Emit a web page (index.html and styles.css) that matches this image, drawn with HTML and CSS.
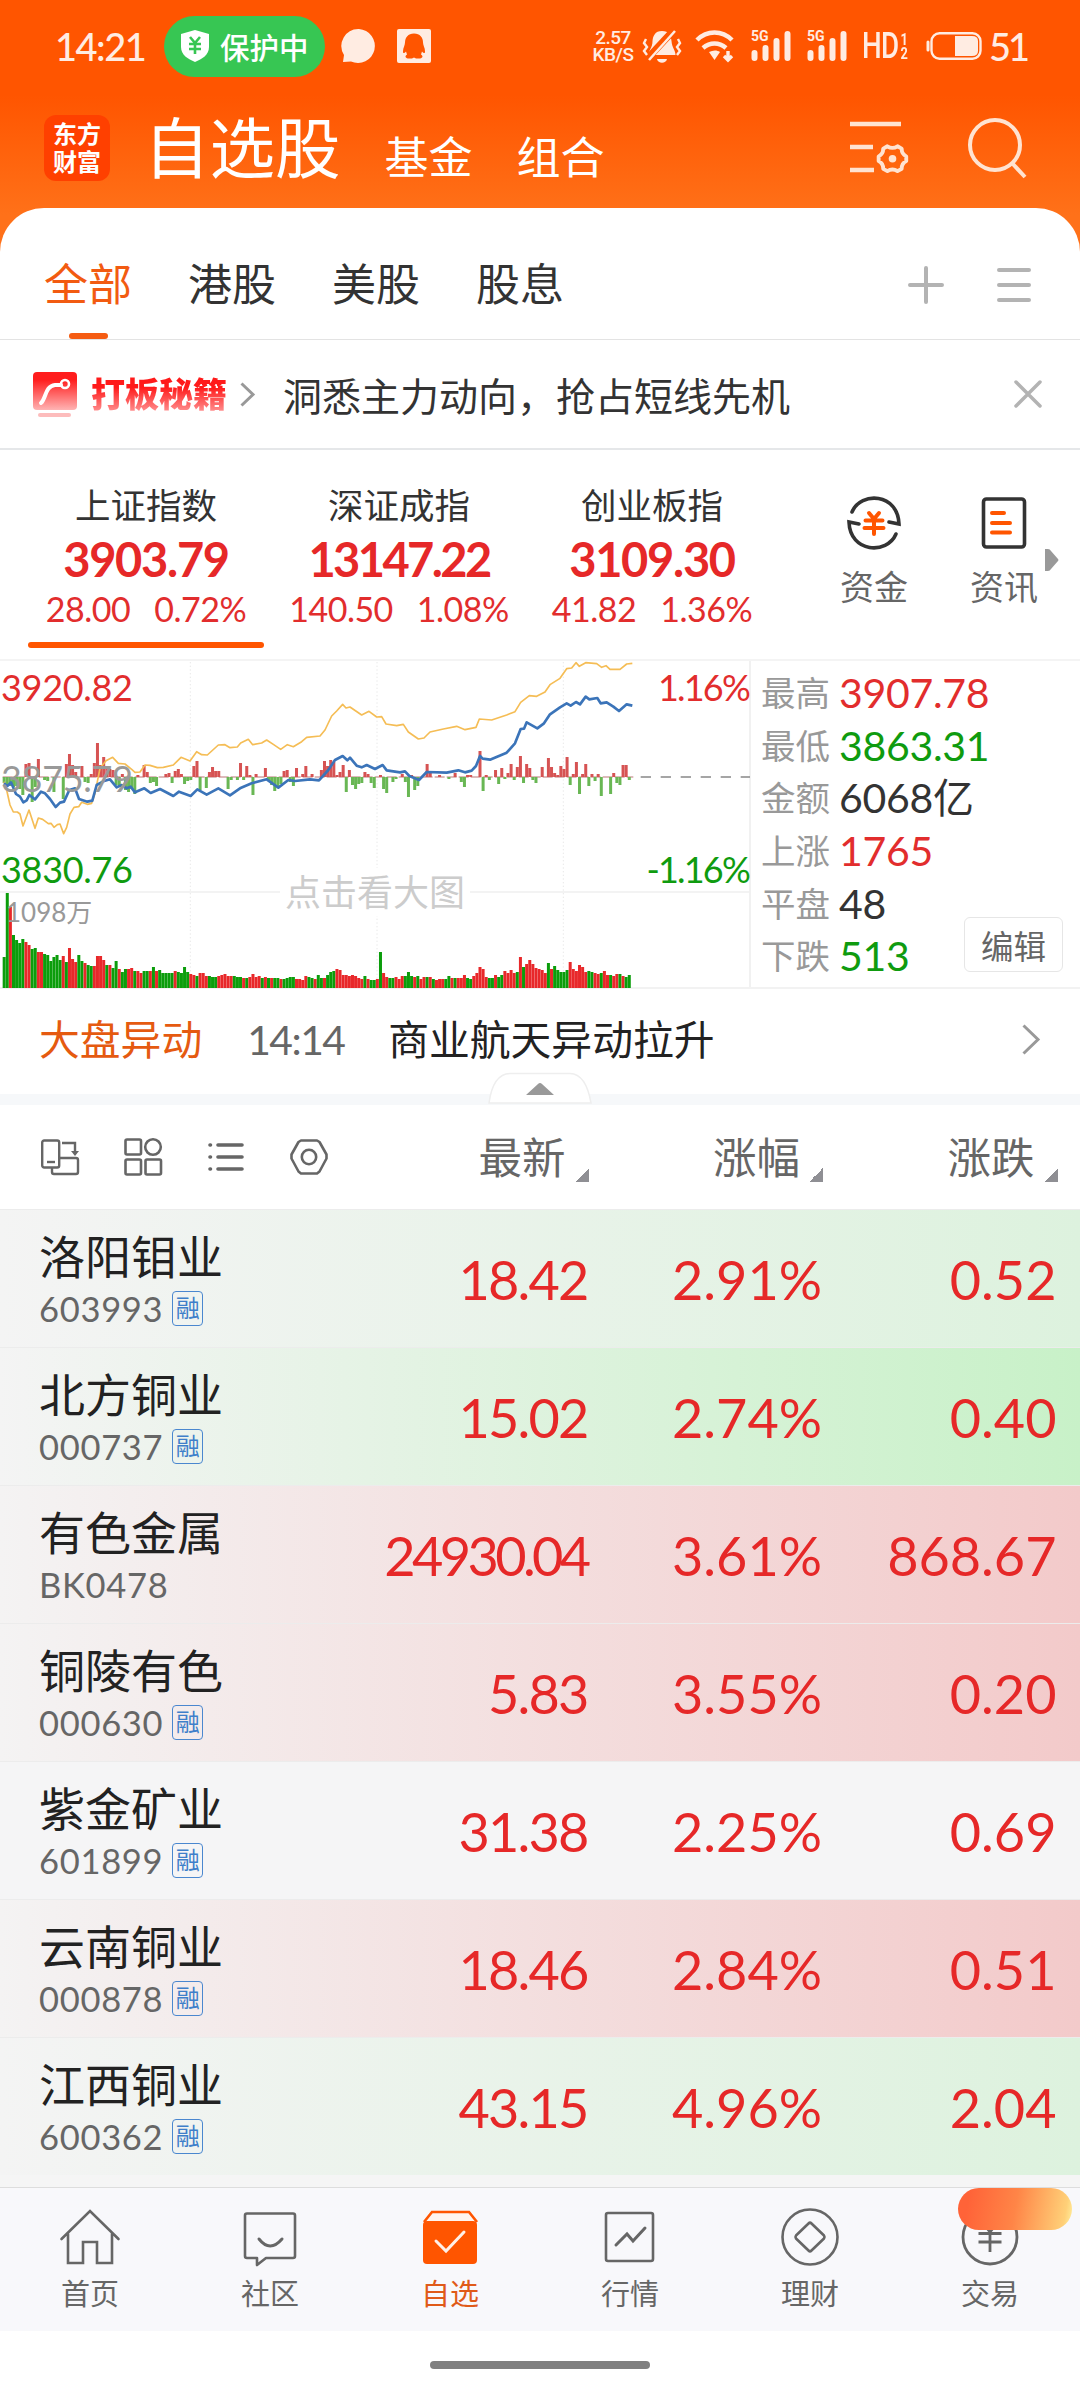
FILE: index.html
```html
<!DOCTYPE html>
<html lang="zh-CN">
<head>
    <meta charset="UTF-8">
    <meta name="viewport" content="width=device-width, initial-scale=1.0">
    <title>自选股</title>
    <link rel="stylesheet" href="styles.css">
</head>
<body>
    <header class="top">
        <div class="status">
            <span class="time">14:21</span>
            <span class="protect">
                <svg width="28" height="32" viewBox="0 0 28 32"><path d="M14 0L28 4V17C28 25 21 29 14 32C7 29 0 25 0 17V4Z" fill="#fff"/><path d="M9 7l5 6 5-6M14 13v11M8 14h12M8 19h12" fill="none" stroke="#37c653" stroke-width="2.6"/></svg>
                保护中
            </span>
            <svg class="bubble" width="35" height="35" viewBox="0 0 35 35"><path d="M18 0a17 17 0 1 1-8 32.500L2 33l1-7A17 17 0 0 1 18 0Z" fill="#ffece2"/></svg>
            <svg class="qq" width="34" height="34" viewBox="0 0 34 34"><rect width="34" height="34" rx="2" fill="#ffece2"/><path d="M17 4.500c6 0 9 4 9 9 0 3 2 5 2 9 0 2-1 2-3 0l-1 3c3 2 1 4-2 4-2 0-4 0-5-1-1 1-3 1-5 1-3 0-5-2-2-4l-1-3c-2 2-3 2-3 0 0-4 2-6 2-9 0-5 3-9 9-9Z" fill="#ff5500"/></svg>
            <div class="status-right">
                <span class="speed"><b>2.57</b><b>KB/S</b></span>
                <svg class="bell" width="38" height="35" viewBox="0 0 38 35"><path d="M19 2c7 0 9 5 9.500 10 .5 7 4 9 4 14H5.500c0-5 4-7 4-14C10 7 12 2 19 2Z" fill="#ffece2"/><path d="M14 30h10c-1 5-9 5-10 0Z" fill="#ffece2"/><path d="M3 31L30 2" stroke="#ff5500" stroke-width="7"/><path d="M6 31L32 2" stroke="#ffece2" stroke-width="2.500"/><path d="M3 10l-2 4 3 4-3 4 3 4M35 10l2 4-3 4 3 4-3 4" fill="none" stroke="#ffece2" stroke-width="2.400"/></svg>
                <svg class="wifi" width="40" height="32" viewBox="0 0 40 32"><g fill="none" stroke="#ffece2" stroke-width="4.500"><path d="M2 10C12 0 27 0 37 10"/><path d="M8 18c7-6 16-6 23 0"/></g><path d="M14 22c4-2 8-2 11 0l-5.500 8Z" fill="#ffece2"/><path d="M33 21v7M29 26l4 4 4-4" fill="none" stroke="#ffece2" stroke-width="3.400"/></svg>
                <svg class="signal" width="40" height="32" viewBox="0 0 40 32"><text x="0" y="11" class="svg-5g">5G</text><g stroke="#ffece2" stroke-width="6" stroke-linecap="round"><path d="M3.500 23v5M14.500 18v10M25.500 11v17M36.500 4v24"/></g></svg>
                <svg class="signal" width="40" height="32" viewBox="0 0 40 32"><text x="0" y="11" class="svg-5g">5G</text><g stroke="#ffece2" stroke-width="6" stroke-linecap="round"><path d="M3.500 23v5M14.500 18v10M25.500 11v17M36.500 4v24"/></g></svg>
                <span class="hd">HD<i><em>1</em><em>2</em></i></span>
                <svg class="battery" width="56" height="28" viewBox="0 0 56 28"><rect x="5.500" y="1.200" width="49" height="25.500" rx="8" fill="none" stroke="#ffece2" stroke-width="2.400"/><path d="M29 4h17q6 0 6 5v10q0 5-6 5H29Z" fill="#ffece2"/><path d="M2 10v8" stroke="#ffece2" stroke-width="3" stroke-linecap="round"/></svg>
                <span class="percent">51</span>
            </div>
        </div>
        <div class="title-bar">
            <div class="logo">东方<br>财富</div>
            <h1>自选股</h1>
            <span class="link">基金</span>
            <span class="link">组合</span>
            <div class="title-icons">
                <svg width="60" height="54" viewBox="0 0 60 54" fill="none" stroke="#ffe3d1" stroke-width="4.500"><path d="M0 3h51M0 26h23M0 49h24"/><path stroke-width="4.200" stroke-linejoin="round" d="M36.500 24q5.500 3.500 11 0l4.500 2.500q0 6 5 8.500v5q-5 2.500-5 8.500l-4.500 2.500q-5.500-3.500-11 0l-4.500-2.500q0-6-5-8.500v-5q5-2.500 5-8.500Z" transform="translate(3.800 3.200) scale(.92)"/><circle cx="42.500" cy="37.700" r="3.800" fill="#ffe3d1" stroke="none"/></svg>
                <svg width="60" height="62" viewBox="0 0 60 62" fill="none" stroke="#ffe3d1" stroke-width="4"><circle cx="27" cy="28" r="25"/><path d="M44 46L57 60"/></svg>
            </div>
        </div>
    </header>

    <main class="sheet">
        <nav class="tabs">
            <span class="tab active">全部</span>
            <span class="tab">港股</span>
            <span class="tab">美股</span>
            <span class="tab">股息</span>
            <div class="tab-icons">
                <svg width="36" height="38" viewBox="0 0 36 38" stroke="#b3b3b3" stroke-width="4" stroke-linecap="round"><path d="M2 19h32M18 2v34"/></svg>
                <svg width="34" height="34" viewBox="0 0 34 34" stroke="#b3b3b3" stroke-width="4" stroke-linecap="round"><path d="M2 2h30M2 17h30M2 32h30"/></svg>
            </div>
        </nav>

        <div class="promo">
            <svg width="44" height="45" viewBox="0 0 44 45">
                <defs><linearGradient id="redFade" x1="0" y1="0" x2="0" y2="1"><stop offset="0.200" stop-color="#ff1d1d"/><stop offset="1" stop-color="#ffb4b4"/></linearGradient></defs>
                <rect width="44" height="38" rx="4" fill="url(#redFade)"/>
                <path d="M8 31C13 27 12 14 22 13h6" fill="none" stroke="#fff" stroke-width="4" stroke-linecap="round"/>
                <circle cx="32" cy="12" r="4" fill="none" stroke="#fff" stroke-width="2.600"/>
                <rect x="5" y="41" width="33" height="4" rx="2" fill="#fdbcbc"/>
            </svg>
            <b class="promo-name">打板秘籍</b>
            <svg class="promo-arrow" width="15" height="25" viewBox="0 0 15 25" fill="none" stroke="#999" stroke-width="3"><path d="M1.500 1.500L13 12.500 1.500 23.500"/></svg>
            <span class="promo-text">洞悉主力动向，抢占短线先机</span>
            <svg class="promo-close" width="28" height="28" viewBox="0 0 28 28" stroke="#b3b3b3" stroke-width="3.500" stroke-linecap="round"><path d="M2 2l24 24M26 2L2 26"/></svg>
        </div>

        <section class="indexes">
            <div class="index active">
                <div class="index-name">上证指数</div>
                <div class="index-value">3903.79</div>
                <div class="index-change"><span>28.00</span><span>0.72%</span></div>
            </div>
            <div class="index">
                <div class="index-name">深证成指</div>
                <div class="index-value long">13147.22</div>
                <div class="index-change"><span>140.50</span><span>1.08%</span></div>
            </div>
            <div class="index">
                <div class="index-name">创业板指</div>
                <div class="index-value">3109.30</div>
                <div class="index-change"><span>41.82</span><span>1.36%</span></div>
            </div>
            <div class="shortcut money">
                <svg width="56" height="56" viewBox="0 0 56 56" fill="none" stroke-width="3.600" stroke-linecap="round"><g stroke="#333"><path d="M6 17C15-4 52-2 53 29l-10-2"/><path d="M50 39C41 60 4 58 3 27l10 2"/></g><path d="M23 18l5 6 5-6M28 24v15M19.500 25.500h17M18.500 33h19" stroke="#ff5500" stroke-width="4"/></svg>
                <span>资金</span>
            </div>
            <div class="shortcut news">
                <svg width="46" height="56" viewBox="0 0 46 56" fill="none" stroke-linecap="round"><rect x="2.500" y="4" width="41" height="48" rx="3" stroke="#333" stroke-width="3.600"/><path d="M11 18h12M11 28h18M11 37.500h18" stroke="#ff5500" stroke-width="4"/></svg>
                <span>资讯</span>
            </div>
            <svg class="more" width="14" height="22" viewBox="0 0 14 22"><path d="M0 0h3q2 0 3 2l7 8q1 1 0 2l-7 8q-1 2-3 2H0Z" fill="#999"/></svg>
        </section>

        <section class="market">
            <div class="chart">
                <svg class="chart-svg" id="chart" width="750" height="328" viewBox="0 30 2250 984">
                    <g stroke="#ddd" stroke-width="2" stroke-dasharray="4 7"><path d="M571 36V1014M1131 36V1014M1690 36V1014"/></g>
                    <path d="M0 726H2250" stroke="#efefef" stroke-width="5"/>
                    <path d="M1922 381H2250" stroke="#888" stroke-width="4" stroke-dasharray="31 29"/>
                    <path d="M8 381H1900" stroke="#b77" stroke-width="3" stroke-dasharray="30 6"/>
                    <g id="power"></g>
                    <g id="volume"></g>
                    <polyline fill="none" stroke="#f5bd55" stroke-width="5" stroke-linejoin="round" points="12,395 20,420 30,465 40,486 52,486 60,492 69,528 87,480 105,535 115,504 128,508 145,521 153,520 162,532 172,524 180,522 191,551 200,532 210,492 222,472 236,470 245,457 262,463 275,460 285,430 292,395 300,355 318,332 338,322 355,340 375,342 395,358 405,367 420,366 435,345 450,346 472,353 490,352 520,345 543,322 570,333 590,305 605,314 622,315 655,285 675,284 690,293 712,291 722,279 745,268 758,284 785,279 800,270 820,283 842,298 862,284 880,290 905,275 920,262 960,258 975,240 995,198 1010,183 1028,163 1038,174 1050,171 1085,195 1107,184 1130,201 1145,200 1158,222 1190,227 1210,223 1225,246 1255,267 1272,264 1290,246 1330,237 1370,229 1395,239 1428,232 1438,207 1475,210 1520,195 1545,185 1562,157 1588,137 1610,139 1635,126 1650,104 1680,85 1700,56 1715,54 1728,38 1738,49 1757,38 1790,41 1805,52 1818,47 1830,58 1860,58 1880,42 1897,40"/>
                    <polyline fill="none" stroke="#3b74b9" stroke-width="8" stroke-linejoin="round" points="12,400 22,408 33,397 48,432 60,440 70,457 80,451 88,435 105,448 123,425 135,430 150,447 167,471 180,458 192,455 208,420 225,415 237,447 262,455 277,452 290,405 310,394 330,388 350,412 365,405 380,415 392,410 405,427 433,415 452,429 480,417 520,438 537,425 572,438 592,418 620,434 655,415 690,436 720,415 755,400 800,388 835,413 865,390 885,393 930,388 957,391 985,360 1005,330 1028,318 1042,331 1050,323 1070,347 1085,352 1100,345 1125,357 1148,345 1160,361 1200,367 1215,364 1228,378 1257,390 1280,366 1340,368 1375,361 1395,367 1415,362 1428,348 1440,318 1448,326 1470,329 1520,308 1545,280 1562,237 1572,236 1580,217 1612,235 1632,220 1650,193 1680,172 1700,160 1712,167 1728,156 1740,163 1757,140 1768,148 1792,144 1802,160 1820,157 1840,170 1857,183 1880,163 1897,167"/>
                </svg>
                <span class="lab high">3920.82</span>
                <span class="lab base">3875.79</span>
                <span class="lab low">3830.76</span>
                <span class="lab up">1.16%</span>
                <span class="lab down">-1.16%</span>
                <span class="lab vol">1098万</span>
                <span class="lab tip">点击看大图</span>
            </div>
            <div class="stats">
                <div class="stat"><label>最高</label><span class="red">3907.78</span></div>
                <div class="stat"><label>最低</label><span class="green">3863.31</span></div>
                <div class="stat"><label>金额</label><span>6068亿</span></div>
                <div class="stat"><label>上涨</label><span class="red">1765</span></div>
                <div class="stat"><label>平盘</label><span>48</span></div>
                <div class="stat"><label>下跌</label><span class="green">513</span></div>
                <button class="edit">编辑</button>
            </div>
        </section>

        <div class="alert">
            <span class="alert-name">大盘异动</span>
            <span class="alert-time">14:14</span>
            <span class="alert-text">商业航天异动拉升</span>
            <svg class="alert-arrow" width="18" height="31" viewBox="0 0 18 31" fill="none" stroke="#999" stroke-width="3"><path d="M1.500 1.500L16 15.500 1.500 29.500"/></svg>
            <svg class="fold" width="104" height="33" viewBox="0 0 104 33"><path d="M1 31Q5 2 22 1.500H82Q98 2 103 31Z" fill="#fff" stroke="#eee" stroke-width="1.500"/><path d="M38 23L50 12q2-2 4 0L66 23Z" fill="#999"/></svg>
        </div>

        <section class="list">
            <div class="list-head">
                <div class="tools">
                    <svg width="38" height="38" viewBox="0 0 38 38" fill="none" stroke="#666" stroke-width="2.400"><rect x="1.200" y="2.500" width="17" height="27" rx="2"/><path d="M6 24h8"/><path d="M18 20h17q2 0 2 2v12q0 2-2 2H13q-2 0-2-2v-4M21 5h13v10"/><path d="M30 13h8l-4 5Z" fill="#666" stroke="none"/></svg>
                    <svg width="38" height="38" viewBox="0 0 38 38" fill="none" stroke="#666" stroke-width="2.600"><rect x="1.500" y="1.500" width="15.500" height="15" rx="1.500"/><circle cx="29" cy="9" r="7.800"/><rect x="1.500" y="21.500" width="15.500" height="15" rx="1.500"/><rect x="21.500" y="21.500" width="15.500" height="15" rx="1.500"/></svg>
                    <svg width="38" height="38" viewBox="0 0 38 38" fill="none" stroke="#666" stroke-width="3.600" stroke-linecap="round"><path d="M3 7h.5M3 19h.5M3 31h.5M11 7h24M11 19h24M11 31h24"/></svg>
                    <svg width="38" height="38" viewBox="0 0 38 38" fill="none" stroke="#666" stroke-width="2.600" stroke-linejoin="round"><path d="M11 2.500h16l2.500 1.500 7 12.500v4l-7 13-2.500 2H11l-2.500-2-7-13v-4l7-12.500Z"/><circle cx="19" cy="19" r="7.200"/></svg>
                </div>
                <span class="col">最新<i></i></span>
                <span class="col">涨幅<i></i></span>
                <span class="col">涨跌<i></i></span>
            </div>
            <div class="row light-green">
                <div class="stock"><div class="stock-name">洛阳钼业</div><div class="code">603993<em>融</em></div></div>
                <span>18.42</span><span>2.91%</span><span>0.52</span>
            </div>
            <div class="row deep-green">
                <div class="stock"><div class="stock-name">北方铜业</div><div class="code">000737<em>融</em></div></div>
                <span>15.02</span><span>2.74%</span><span>0.40</span>
            </div>
            <div class="row pink">
                <div class="stock"><div class="stock-name">有色金属</div><div class="code">BK0478</div></div>
                <span class="long">24930.04</span><span>3.61%</span><span>868.67</span>
            </div>
            <div class="row pink">
                <div class="stock"><div class="stock-name">铜陵有色</div><div class="code">000630<em>融</em></div></div>
                <span>5.83</span><span>3.55%</span><span>0.20</span>
            </div>
            <div class="row">
                <div class="stock"><div class="stock-name">紫金矿业</div><div class="code">601899<em>融</em></div></div>
                <span>31.38</span><span>2.25%</span><span>0.69</span>
            </div>
            <div class="row pink">
                <div class="stock"><div class="stock-name">云南铜业</div><div class="code">000878<em>融</em></div></div>
                <span>18.46</span><span>2.84%</span><span>0.51</span>
            </div>
            <div class="row light-green">
                <div class="stock"><div class="stock-name">江西铜业</div><div class="code">600362<em>融</em></div></div>
                <span>43.15</span><span>4.96%</span><span>2.04</span>
            </div>
        </section>
    </main>

    <footer class="bottom">
        <div class="menu">
            <svg width="60" height="60" viewBox="0 0 60 60" fill="none" stroke="#666" stroke-width="2.600" stroke-linecap="round"><path d="M1.500 32L30 4 58.500 32M8 27v29h15V35h14v21h15V27"/></svg>
            <span>首页</span>
        </div>
        <div class="menu">
            <svg width="60" height="60" viewBox="0 0 60 60" fill="none" stroke="#666" stroke-width="2.600" stroke-linecap="round" stroke-linejoin="round"><path d="M7 6.500h46q2 0 2 2V49q0 2-2 2H26l-9 7v-7H7q-2 0-2-2V8.500q0-2 2-2Z"/><path d="M19 32q11 14 23 0" stroke-width="3"/></svg>
            <span>社区</span>
        </div>
        <div class="menu active">
            <svg width="60" height="60" viewBox="0 0 60 60" fill="none"><path d="M4 15l8-10h37l8 10" stroke="#ff5500" stroke-width="2.600" fill="#fff4ee"/><rect x="3" y="14" width="54" height="43" rx="4" fill="#ff5500"/><path d="M16 34l10 10 18-19" stroke="#fff0e8" stroke-width="3" stroke-linecap="round"/></svg>
            <span>自选</span>
        </div>
        <div class="menu">
            <svg width="60" height="60" viewBox="0 0 60 60" fill="none" stroke="#666" stroke-width="2.600" stroke-linecap="round"><rect x="6" y="6" width="47" height="48" rx="2"/><path d="M16 38l11-11 6 7 12-13" stroke-width="3"/></svg>
            <span>行情</span>
        </div>
        <div class="menu">
            <svg width="60" height="60" viewBox="0 0 60 60" fill="none" stroke="#666" stroke-width="2.600" stroke-linejoin="round"><circle cx="30" cy="30" r="27.500"/><path d="M28.500 16.500q1.500-1.500 3 0L44 28.500q1 1.500 0 3L31.500 43.500q-1.500 1.500-3 0L16 31.500q-1-1.500 0-3Z"/></svg>
            <span>理财</span>
        </div>
        <div class="menu">
            <svg width="60" height="60" viewBox="0 0 60 60" fill="none" stroke="#666" stroke-width="2.800"><circle cx="30" cy="30" r="27"/><path d="M22 15l8 10 8-10M30 25v20M18.500 26.500h23M18.500 35h23"/></svg>
            <span>交易</span>
            <i class="badge"></i>
        </div>
    </footer>
    <div class="home-bar"></div>

    <script>
        // 分时图数据: 成交量高度 + 颜色 (r 涨 / g 跌)
        const volume = [31,95,81,53,48,45,49,46,43,39,40,36,36,34,33,27,31,33,28,32,26,40,29,26,33,27,25,23,22,22,32,32,28,23,23,20,27,19,16,19,
            19,20,17,17,15,17,17,17,21,17,18,15,15,15,15,17,16,15,21,16,14,13,12,15,15,12,12,11,11,12,13,14,12,12,12,11,11,10,10,11,
            14,11,12,10,11,10,10,10,10,9,9,10,11,11,9,9,8,12,11,10,9,13,10,10,13,16,17,19,18,13,13,12,13,12,10,9,12,9,8,8,
            9,36,15,11,10,10,11,9,12,12,16,12,11,12,9,11,11,11,9,8,9,9,9,12,10,10,10,10,13,10,9,12,15,21,19,11,10,10,13,11,
            13,17,15,18,15,16,31,21,24,28,24,20,19,18,15,25,19,22,18,16,16,18,26,19,17,23,21,16,17,16,15,14,15,17,13,13,12,14,14,12,11,13,12,9]
        const color = 'ggrggggrrggrrggggggrgrrrggrggrrrrgrggrggrrgrrggrgrgggggrggggrrgrrrgggrrrrrggg' +
            'rgrrrrgrgrggrggggrrrrggrggrgggrrrrrrrrrgrggrgrrggrrrgggrgrrgrgrrrggrgrrrggrrrrrggrggrrrrgrgr' +
            'rrrrrrgrgggggrrrrrrggrrgrrgrrgrggrrg'
        // 中轴红绿柱: [分钟, 高度]
        const power = [[0,-6],[1,-8],[2,-9],[3,-10],[4,-9],[5,-12],[6,-18],[7,13],[8,14],[9,-25],[10,-10],[11,18],[13,-3],[14,-4],[16,-15],[19,-22],[20,13],[21,23],[22,12],[23,5],[25,11],[26,-5],[27,-6],[28,3],[29,14],[30,34],[31,12],[32,20],[33,10],[34,8],[35,7],[36,-8],[37,-10],[38,3],[39,-13],[40,-15],[41,-12],[42,-17],
            [43,2],[45,12],[46,5],[47,-6],[48,-5],[49,-9],[52,3],[53,4],[54,-6],[55,6],[56,8],[57,3],[58,-7],[59,-4],[60,-3],[61,11],[62,16],[63,-13],[65,-11],[66,5],[67,10],[68,6],[69,6],[72,-12],[73,-3],[75,-3],[76,14],[77,-3],[78,11],[79,2],[80,-18],[81,3],[84,9],[85,-4],[86,-8],[87,-14],[88,-9],[89,-7],[90,6],[91,7],[92,-5],[93,-9],[94,9],
            [96,3],[97,11],[99,3],[102,7],[103,16],[104,11],[105,17],[106,15],[107,2],[108,5],[109,12],[110,-15],[111,7],[112,-8],[113,-12],[114,-7],[115,-6],[116,5],[117,3],[118,-6],[119,-11],[121,2],[122,-12],[123,-16],[125,-5],[126,-2],[128,3],[129,-5],[130,-20],[131,2],[132,-13],[133,-9],[136,13],[137,5],[140,2],[143,-2],[145,4],[147,-5],[148,-10],[149,2],[150,2],
            [153,26],[154,-14],[155,2],[156,-3],[158,7],[159,-7],[160,9],[161,-2],[162,4],[163,13],[164,-3],[165,10],[166,21],[167,-6],[168,13],[169,9],[170,-3],[171,-6],[173,10],[175,19],[176,10],[177,4],[178,2],[179,11],[180,8],[181,20],[182,-8],[183,3],[184,15],[185,-17],[186,3],[187,13],[188,-9],[189,3],[190,-4],[191,3],[192,-19],[195,-17],[196,4],[197,-6],[198,-8],[199,12],[200,12],[201,-3]]

        const step = 9.33
        function drawBars() {
            let tag = ''
            volume.slice(0, 202).forEach((v, i) => {
                const h = v * 3
                tag += `<rect x="${8 + i * step}" y="${1014 - h}" width="9" height="${h}" fill="${color[i] == 'g' ? '#0b9d0b' : '#e8282a'}"/>`
            })
            document.querySelector('#volume').innerHTML = tag

            tag = ''
            power.forEach(([i, v]) => {
                const h = Math.abs(v) * 3
                tag += `<rect x="${8 + i * step}" y="${v > 0 ? 381 - h : 381}" width="9" height="${h}" fill="${v > 0 ? '#d65353' : '#69b754'}"/>`
            })
            document.querySelector('#power').innerHTML = tag
        }
        drawBars()
    </script>
</body>
</html>
```
FILE: styles.css
```css
* {
    box-sizing: border-box;
}
body {
    margin: 0;
    width: 1080px;
    height: 2400px;
    overflow: hidden;
    background: #fff;
    color: #333;
    font-family: "Lato", "Noto Sans CJK SC", sans-serif;
}
svg {
    display: block;
    flex: none;
    overflow: visible;
}
i, em {
    font-style: normal;
}
.red {
    color: #e22d2d;
}
.green {
    color: #0f9b0f;
}

/* 顶部 */
.top {
    height: 260px;
    background: linear-gradient(#ff5500 95px, #ff7119 215px);
    color: #fff;
}
.status {
    display: flex;
    align-items: center;
    height: 92px;
    padding-left: 55px;
    color: #ffece2;
}
.time {
    width: 109px;
    font-size: 38px;
    line-height: 46px;
    letter-spacing: -1.5px;
    font-weight: 500;
}
.protect {
    display: flex;
    align-items: center;
    gap: 11px;
    width: 161px;
    height: 61px;
    padding-left: 17px;
    border-radius: 31px;
    background: #37c653;
    color: #fff;
    font-size: 29.5px;
    font-weight: 500;
    white-space: nowrap;
}
.bubble {
    margin-left: 16px;
}
.qq {
    margin-left: 21px;
}
.status-right {
    display: flex;
    align-items: center;
    margin-left: 160px;
}
.speed {
    display: flex;
    flex-direction: column;
    align-items: center;
    width: 44px;
    font-family: "Roboto", sans-serif;
    font-size: 19px;
    line-height: 17px;
}
.speed b {
    font-weight: 500;
    letter-spacing: -0.5px;
}
.bell {
    margin-left: 8px;
}
.wifi {
    margin-left: 14px;
}
.signal {
    margin-left: 16px;
}
.svg-5g {
    font: 700 14px "Roboto", sans-serif;
    fill: #ffece2;
}
.hd {
    display: flex;
    align-items: center;
    gap: 3px;
    width: 46px;
    margin-left: 15px;
    font: 500 37px/34px "Roboto", sans-serif;
    letter-spacing: -1px;
    transform: scaleX(0.75);
    transform-origin: left;
}
.hd i {
    display: flex;
    flex-direction: column;
    font-size: 17px;
    line-height: 14px;
    font-weight: 700;
}
.battery {
    margin-left: 18px;
}
.percent {
    margin-left: 7px;
    font-size: 38px;
    line-height: 46px;
    font-weight: 500;
    letter-spacing: -3px;
}
.title-bar {
    display: flex;
    align-items: center;
    height: 112px;
    padding-left: 44px;
}
.logo {
    width: 66px;
    height: 66px;
    padding-top: 5px;
    border-radius: 12px;
    background: #ff4000;
    font-size: 24px;
    line-height: 28px;
    font-weight: 700;
    text-align: center;
}
h1 {
    margin: 0 0 0 34px;
    font-size: 65.5px;
    line-height: 90px;
    font-weight: 400;
}
.link {
    margin: 17px 0 0 44px;
    font-size: 44px;
    line-height: 60px;
}
.title-icons {
    display: flex;
    align-items: center;
    gap: 58px;
    margin: 0 52px 0 auto;
}

/* 白色面板 */
.sheet {
    margin-top: -52px;
    border-radius: 44px 44px 0 0;
    background: #fff;
}
.tabs {
    display: flex;
    align-items: center;
    gap: 56px;
    height: 132px;
    padding: 22px 49px 0 44px;
    border-bottom: 1px solid #e3e3e3;
    font-size: 44px;
}
.tab {
    position: relative;
    line-height: 109px;
}
.tab.active {
    color: #f25b11;
}
.tab.active::after {
    content: "";
    position: absolute;
    left: 25px;
    bottom: 0;
    width: 39px;
    height: 6px;
    border-radius: 3px;
    background: #f55c12;
}
.tab-icons {
    display: flex;
    align-items: center;
    gap: 53px;
    margin-left: auto;
}
.promo {
    display: flex;
    align-items: center;
    height: 110px;
    padding: 0 38px 0 33px;
    border-bottom: 2px solid #e5e7e9;
}
.promo-name {
    margin-left: 14px;
    font-size: 34px;
    line-height: 44px;
    font-weight: 900;
    background: linear-gradient(#ff1a1a 35%, #ff9a9a 95%);
    -webkit-background-clip: text;
    color: transparent;
}
.promo-arrow {
    margin-left: 13px;
}
.promo-text {
    margin-left: 28px;
    font-size: 39px;
}
.promo-close {
    margin-left: auto;
}

/* 指数 */
.indexes {
    display: flex;
    position: relative;
    height: 211px;
    padding-left: 28px;
    border-bottom: 2px solid #f4f4f4;
}
.index {
    position: relative;
    width: 236px;
    height: 198px;
    margin-right: 17px;
    padding-top: 30px;
    text-align: center;
    white-space: nowrap;
}
.index.active::after {
    content: "";
    position: absolute;
    left: 0;
    bottom: 0;
    width: 236px;
    height: 6px;
    border-radius: 3px;
    background: #ff5500;
}
.index-name {
    font-size: 35.5px;
    line-height: 52px;
}
.index-value {
    color: #e62828;
    font-size: 47px;
    line-height: 55px;
    font-weight: 700;
    letter-spacing: -1.3px;
}
.index-value.long {
    letter-spacing: -2.6px;
}
.index-change {
    display: flex;
    justify-content: center;
    gap: 24px;
    color: #e22d2d;
    font-size: 34px;
    line-height: 44px;
    letter-spacing: -0.5px;
}
.shortcut {
    display: flex;
    flex-direction: column;
    align-items: center;
    gap: 10px;
    width: 70px;
    padding-top: 45px;
    color: #666;
    font-size: 34px;
    line-height: 52px;
}
.money {
    margin-left: 52px;
}
.news {
    margin-left: 60px;
}
.more {
    position: absolute;
    left: 1045px;
    top: 99px;
}

/* 分时图 + 统计 */
.market {
    display: flex;
    height: 328px;
    border-bottom: 2px solid #f2f2f2;
}
.chart {
    position: relative;
    width: 751px;
    border-right: 2px solid #f1f1f1;
}
.chart-svg {
    margin-top: -1px;
}
.lab {
    position: absolute;
    left: 1px;
    font-size: 36px;
    line-height: 40px;
    letter-spacing: -0.3px;
}
.high {
    top: 6px;
    color: #e22d2d;
}
.base {
    top: 97px;
    color: #999;
}
.low {
    top: 188px;
    color: #0f9b0f;
}
.up {
    left: auto;
    right: 0;
    top: 6px;
    color: #e22d2d;
    letter-spacing: -1.8px;
}
.down {
    left: auto;
    right: 0;
    top: 188px;
    color: #0f9b0f;
    letter-spacing: -1.8px;
}
.vol {
    left: 6px;
    top: 231px;
    color: #999;
    font-size: 26px;
    letter-spacing: 0;
}
.tip {
    left: 280px;
    top: 207px;
    padding: 0 5px;
    background: #fff;
    color: #ccc;
    font-size: 36px;
    line-height: 48px;
    letter-spacing: 0;
}
.stats {
    position: relative;
    flex: 1;
    padding: 6px 0 0 10px;
}
.stat {
    display: flex;
    align-items: center;
    height: 52.6px;
    font-size: 41px;
    line-height: 52px;
    letter-spacing: -0.3px;
}
.stat label {
    width: 78px;
    color: #999;
    font-size: 34.5px;
    letter-spacing: 0;
}
.edit {
    position: absolute;
    right: 17px;
    bottom: 15px;
    width: 99px;
    height: 55px;
    padding: 0;
    border: 1px solid #e6e6e6;
    border-radius: 6px;
    background: #fff;
    color: #666;
    font: 32.5px/50px "Noto Sans CJK SC", sans-serif;
}
.alert {
    display: flex;
    align-items: center;
    position: relative;
    height: 116px;
    padding: 0 40px 0 39px;
    border-bottom: 11px solid #f6f8fa;
    font-size: 40.8px;
    line-height: 60px;
    color: #222;
}
.alert > span, .alert-arrow {
    margin-bottom: 4px;
}
.alert-name {
    color: #e55a10;
}
.alert-time {
    width: 141px;
    margin-left: 45px;
    color: #666;
    letter-spacing: -1.5px;
}
.alert-arrow {
    margin-left: auto;
}
.fold {
    position: absolute;
    left: 488px;
    top: 83px;
}

/* 自选列表 */
.list {
    height: 1082px;
    background: #f5f5f5;
}
.list-head {
    display: flex;
    align-items: center;
    height: 104px;
    padding-left: 41px;
    background: #fff;
    color: #666;
    font-size: 43.5px;
}
.tools {
    display: flex;
    gap: 45px;
    width: 313px;
}
.col {
    display: flex;
    justify-content: flex-end;
    width: 234.5px;
    line-height: 60px;
}
.col i {
    width: 14px;
    height: 14px;
    margin: 41px 0 0 9px;
    background: linear-gradient(135deg, transparent 50%, #8f8f94 50%);
}
.row {
    display: flex;
    align-items: center;
    height: 138px;
    padding: 2px 0 0 39px;
    border-top: 1px solid #ececec;
    background: #f5f5f6;
    color: #e62828;
    font-size: 54px;
    letter-spacing: 0;
}
.row > span {
    width: 234.5px;
    text-align: right;
}
.row > span:nth-child(2) {
    width: 233.5px;
    letter-spacing: -1.8px;
}
.row > span.long {
    letter-spacing: -3.6px;
}
.light-green {
    background: linear-gradient(90deg, #f4f4f4, #ddf2de);
}
.deep-green {
    background: linear-gradient(90deg, #f4f4f4, #c8f1c8);
}
.pink {
    background: linear-gradient(90deg, #f4f3f3, #f3caca);
}
.stock {
    width: 315px;
}
.stock-name {
    color: #222;
    font-size: 46px;
    line-height: 58px;
}
.code {
    display: flex;
    align-items: center;
    height: 46px;
    color: #666;
    font-size: 34.5px;
    letter-spacing: 0.7px;
}
.code em {
    width: 31px;
    height: 35px;
    margin-left: 9px;
    border: 1.5px solid #4a87cf;
    border-radius: 4px;
    color: #3f7fca;
    font-size: 24px;
    line-height: 31px;
    letter-spacing: 0;
    text-align: center;
}

/* 底部导航 */
.bottom {
    display: flex;
    height: 144px;
    border-top: 1px solid #ddd;
    background: #f8f8fb;
}
.menu {
    display: flex;
    flex-direction: column;
    align-items: center;
    position: relative;
    width: 180px;
    padding-top: 19px;
    color: #666;
    font-size: 29px;
    line-height: 54px;
}
.menu.active {
    color: #e05a18;
}
.badge {
    position: absolute;
    left: 58px;
    top: 0;
    width: 114px;
    height: 42px;
    border-radius: 21px;
    background: linear-gradient(100deg, #ff6338 10%, #ff8547 50%, #ffd078 92%, #fff2a0);
}
.home-bar {
    width: 220px;
    height: 8px;
    margin: 30px auto 0;
    border-radius: 4px;
    background: #808080;
}
```
